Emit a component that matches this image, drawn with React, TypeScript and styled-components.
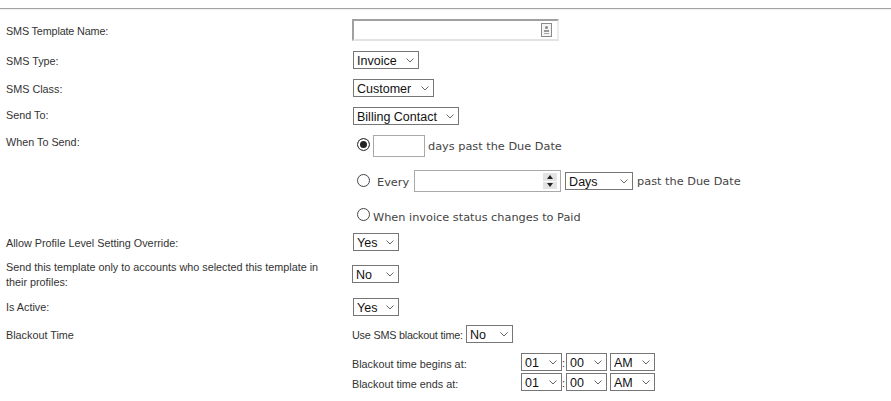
import React from "react";
import styled, { createGlobalStyle } from "styled-components";

const Global = createGlobalStyle`
  html, body {
    margin: 0;
    padding: 0;
    background: #fff;
  }
`;

const Page = styled.div`
  width: 891px;
  height: 401px;
  overflow: hidden;
  padding-top: 8px;
  box-sizing: border-box;
  font-family: "Liberation Sans", Arial, sans-serif;
  font-size: 10.8px;
  color: #333;
`;

const Rule = styled.div`
  height: 1px;
  background: #a3a3a3;
  border-bottom: 1px solid #f1f1f1;
`;

const Form = styled.div`
  display: flex;
  flex-direction: column;
  padding-top: 9px;
`;

const Row = styled.div<{ $h: number }>`
  display: grid;
  grid-template-columns: 352px 1fr;
  height: ${(p) => p.$h}px;
`;

const Label = styled.div<{ $pad?: number; $track?: number }>`
  padding: ${(p) => p.$pad ?? 0}px 20px 0 6px;
  line-height: 15px;
  letter-spacing: ${(p) => p.$track ?? 0}px;
`;

const Cell = styled.div<{ $left?: number; $top?: number }>`
  display: flex;
  align-items: flex-start;
  padding-left: ${(p) => p.$left ?? 0}px;
  padding-top: ${(p) => p.$top ?? 0}px;
`;

const SelectBox = styled.div<{ $w: number }>`
  position: relative;
  width: ${(p) => p.$w}px;
  height: 18px;
  flex: none;
  svg {
    position: absolute;
    right: 5px;
    top: 7px;
    pointer-events: none;
  }
`;

const NativeSelect = styled.select`
  appearance: none;
  width: 100%;
  height: 100%;
  margin: 0;
  padding: 2px 0 0 3px;
  border: 1px solid #767676;
  border-radius: 0;
  background: #fff;
  color: #111;
  font-family: "Liberation Sans", Arial, sans-serif;
  font-size: 12.5px;
  line-height: 14px;
  box-sizing: border-box;
`;

function Select({ w, value }: { w: number; value: string }) {
  return (
    <SelectBox $w={w}>
      <NativeSelect defaultValue={value}>
        <option>{value}</option>
      </NativeSelect>
      <svg width="8" height="5" viewBox="0 0 8 5" fill="none">
        <path d="M0.5 0.5 L4 4 L7.5 0.5" stroke="#666" strokeWidth="1" />
      </svg>
    </SelectBox>
  );
}

const NameField = styled.div`
  position: relative;
  width: 207px;
  height: 22px;
  box-sizing: border-box;
  border: 2px solid;
  border-color: #a0a0a0 #ececec #e3e3e3 #a0a0a0;
  svg {
    position: absolute;
    right: 5px;
    top: 2px;
  }
`;

const Bare = styled.input`
  width: 100%;
  height: 100%;
  padding: 0;
  border: 0;
  outline: 0;
  background: transparent;
  box-sizing: border-box;
`;

const Box = styled.div<{ $w: number; $left?: number }>`
  position: relative;
  width: ${(p) => p.$w}px;
  height: 22px;
  flex: none;
  margin-left: ${(p) => p.$left ?? 0}px;
  box-sizing: border-box;
  border: 1px solid #a9a9a9;
`;

const Spinner = styled.div`
  position: absolute;
  right: 3px;
  top: 2px;
  width: 14px;
  height: 16px;
  display: flex;
  flex-direction: column;
  gap: 1px;
`;

const SpinButton = styled.div`
  flex: 1;
  background: #e4e4e4;
  display: flex;
  align-items: center;
  justify-content: center;
`;

const Arrow = styled.i<{ $up?: boolean }>`
  width: 0;
  height: 0;
  border-left: 3.5px solid transparent;
  border-right: 3.5px solid transparent;
  ${(p) => (p.$up ? "border-bottom: 4px solid #222;" : "border-top: 4px solid #222;")}
`;

const Radio = styled.span<{ $on?: boolean }>`
  display: block;
  width: 13px;
  height: 13px;
  box-sizing: border-box;
  border: 1px solid #444;
  border-radius: 50%;
  background: ${(p) => (p.$on ? "#222" : "#fff")};
  box-shadow: ${(p) => (p.$on ? "inset 0 0 0 2px #fff" : "none")};
`;

const Options = styled.div`
  display: flex;
  flex-direction: column;
  padding-left: 5px;
`;

const Option = styled.div<{ $h: number; $gap: number }>`
  display: flex;
  align-items: flex-start;
  height: ${(p) => p.$h}px;
  gap: ${(p) => p.$gap}px;
`;

const RadioSlot = styled.div<{ $top: number }>`
  padding-top: ${(p) => p.$top}px;
  flex: none;
`;

const Wide = styled.span<{ $top: number; $left?: number }>`
  font-family: "DejaVu Sans", Verdana, sans-serif;
  font-size: 11.3px;
  line-height: 14px;
  color: #444;
  padding-top: ${(p) => p.$top}px;
  margin-left: ${(p) => p.$left ?? 0}px;
  white-space: nowrap;
`;

const SelectSlot = styled.div`
  padding-top: 2px;
  margin-left: 4px;
`;

const Inline = styled.span<{ $w: number; $top: number; $track?: number }>`
  line-height: 18px;
  white-space: nowrap;
  width: ${(p) => p.$w}px;
  padding-top: ${(p) => p.$top}px;
  letter-spacing: ${(p) => p.$track ?? 0}px;
  flex: none;
`;

const Colon = styled.span`
  width: 4px;
  text-align: left;
  line-height: 18px;
  padding-top: 1px;
  flex: none;
`;

const TimeRow = styled.div`
  display: flex;
  align-items: flex-start;
`;

const Gap = styled.div`
  width: 3px;
  flex: none;
`;

function TimePicker() {
  return (
    <>
      <Select w={41} value="01" />
      <Colon>:</Colon>
      <Select w={41} value="00" />
      <Gap />
      <Select w={45} value="AM" />
    </>
  );
}

export default function App() {
  return (
    <Page>
      <Global />
      <Rule />
      <Form>
        <Row $h={32}>
          <Label $pad={5} $track={-0.15}>SMS Template Name:</Label>
          <Cell>
            <NameField>
              <Bare />
              <svg width="11" height="14" viewBox="0 0 11 14">
                <rect x="0.5" y="0.5" width="10" height="13" fill="#f4f4f4" stroke="#8a8a8a" />
                <circle cx="5.5" cy="4.5" r="1.5" fill="#888" />
                <rect x="3" y="7" width="5" height="2" fill="#999" />
                <rect x="3" y="10" width="5" height="1" fill="#aaa" />
              </svg>
            </NameField>
          </Cell>
        </Row>
        <Row $h={28}>
          <Label $pad={3}>SMS Type:</Label>
          <Cell $left={1}><Select w={66} value="Invoice" /></Cell>
        </Row>
        <Row $h={28}>
          <Label $pad={3}>SMS Class:</Label>
          <Cell $left={1}><Select w={81} value="Customer" /></Cell>
        </Row>
        <Row $h={28}>
          <Label $pad={1}>Send To:</Label>
          <Cell $left={1}><Select w={106} value="Billing Contact" /></Cell>
        </Row>
        <Row $h={98}>
          <Label $pad={0}>When To Send:</Label>
          <Options>
            <Option $h={35} $gap={3}>
              <RadioSlot $top={3}><Radio $on /></RadioSlot>
              <Box $w={52} />
              <Wide $top={5}>days past the Due Date</Wide>
            </Option>
            <Option $h={36} $gap={0}>
              <RadioSlot $top={4}><Radio /></RadioSlot>
              <Wide $top={6} $left={7}>Every</Wide>
              <Box $w={147} $left={5}>
                <Spinner>
                  <SpinButton><Arrow $up /></SpinButton>
                  <SpinButton><Arrow /></SpinButton>
                </Spinner>
              </Box>
              <SelectSlot><Select w={68} value="Days" /></SelectSlot>
              <Wide $top={5} $left={4}>past the Due Date</Wide>
            </Option>
            <Option $h={27} $gap={3}>
              <RadioSlot $top={2}><Radio /></RadioSlot>
              <Wide $top={5}>When invoice status changes to Paid</Wide>
            </Option>
          </Options>
        </Row>
        <Row $h={27}>
          <Label $pad={3}>Allow Profile Level Setting Override:</Label>
          <Cell $left={1}><Select w={46} value="Yes" /></Cell>
        </Row>
        <Row $h={38}>
          <Label $pad={0}>Send this template only to accounts who selected this template in their profiles:</Label>
          <Cell $top={5}><Select w={47} value="No" /></Cell>
        </Row>
        <Row $h={27}>
          <Label $pad={2}>Is Active:</Label>
          <Cell $left={1}><Select w={46} value="Yes" /></Cell>
        </Row>
        <Row $h={28}>
          <Label $pad={3}>Blackout Time</Label>
          <Cell>
            <Inline $w={114} $top={1} $track={-0.2}>Use SMS blackout time:</Inline>
            <Select w={47} value="No" />
          </Cell>
        </Row>
        <Row $h={20}>
          <div />
          <TimeRow>
            <Inline $w={169} $top={2}>Blackout time begins at:</Inline>
            <TimePicker />
          </TimeRow>
        </Row>
        <Row $h={20}>
          <div />
          <TimeRow>
            <Inline $w={169} $top={2}>Blackout time ends at:</Inline>
            <TimePicker />
          </TimeRow>
        </Row>
      </Form>
    </Page>
  );
}
